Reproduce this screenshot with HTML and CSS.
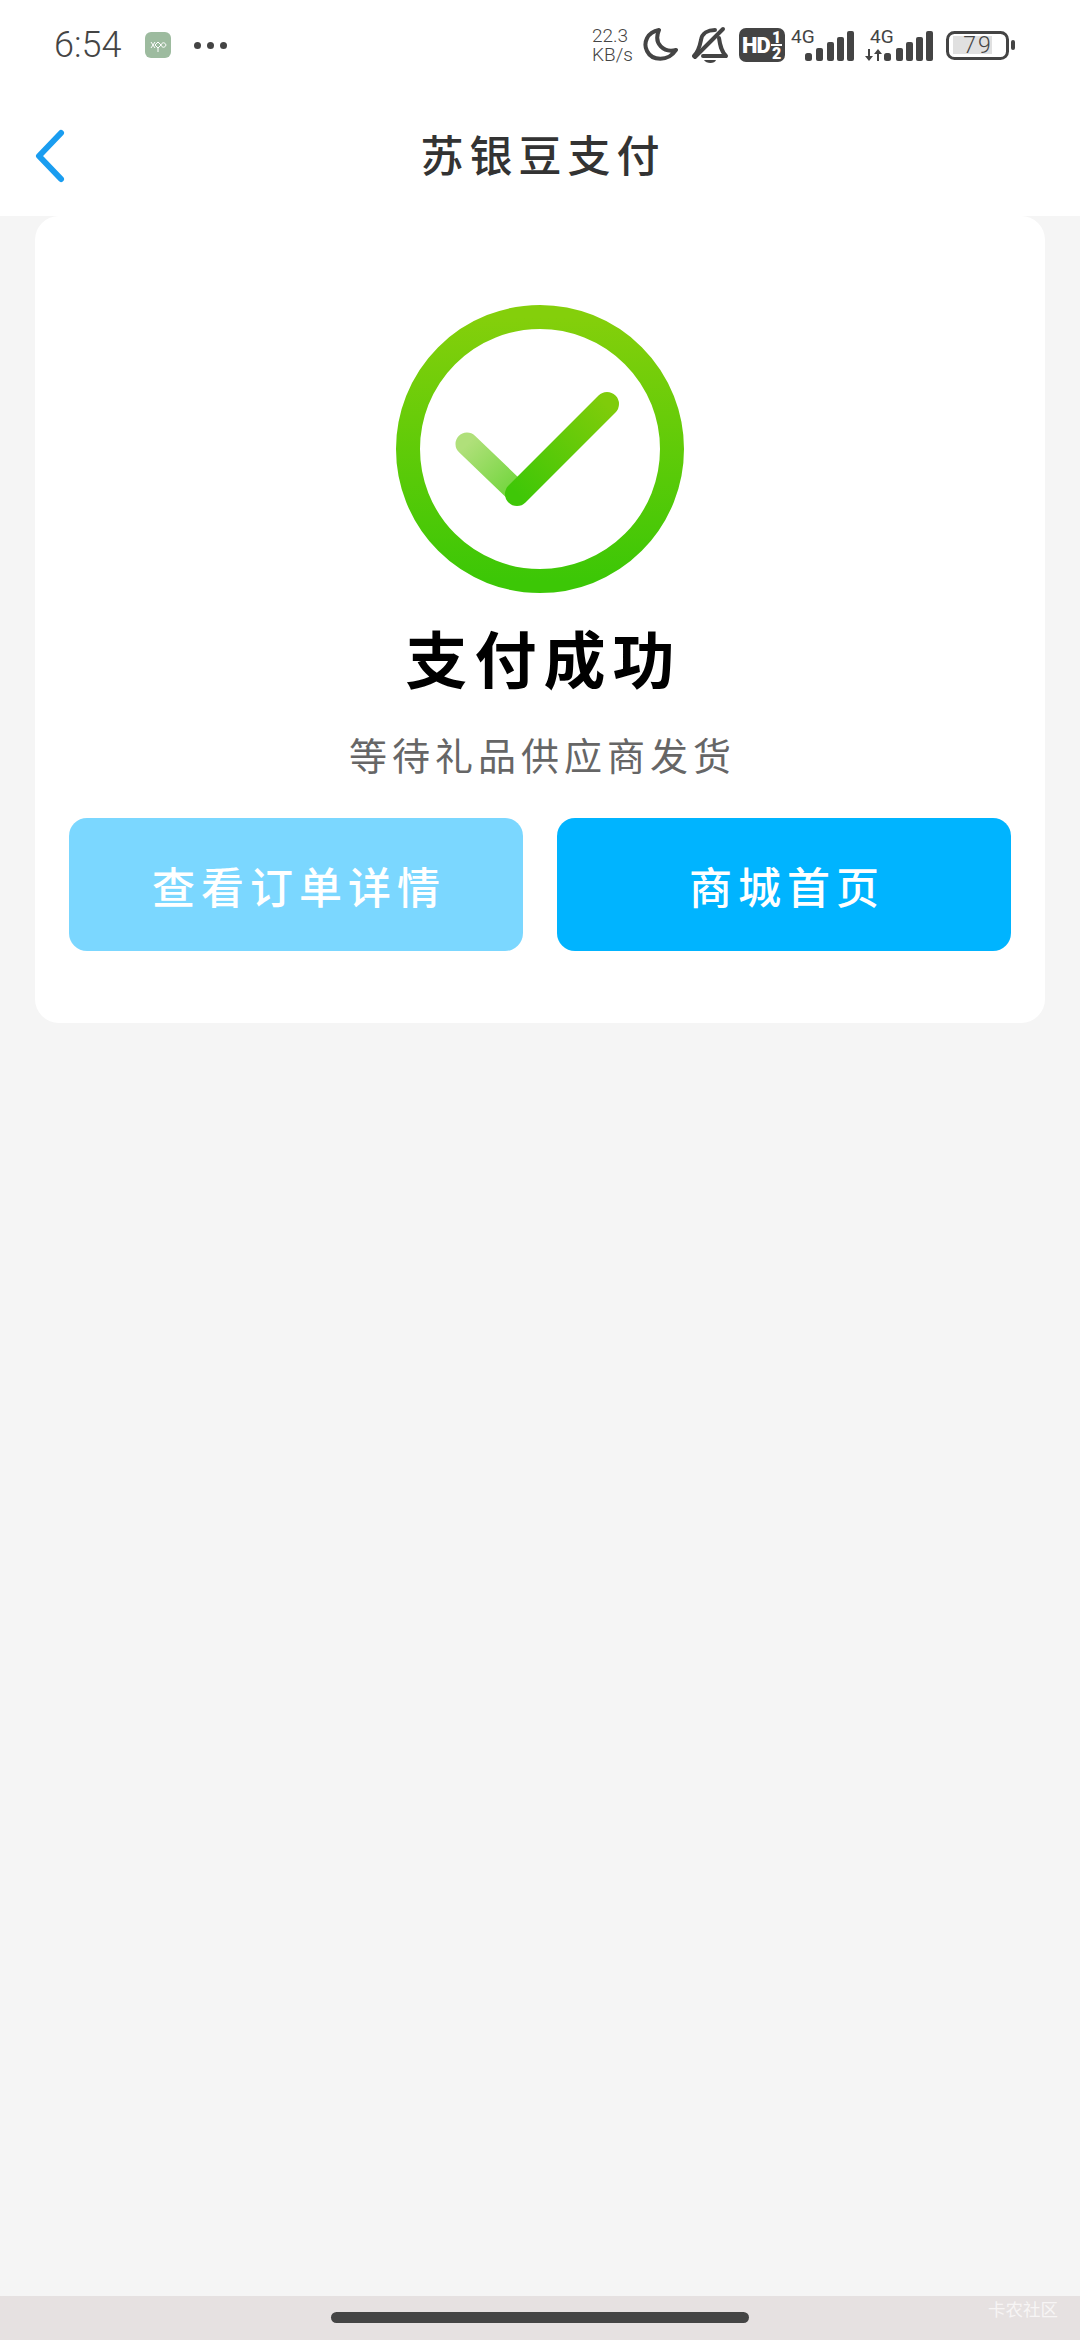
FILE: index.html
```html
<!DOCTYPE html>
<html lang="zh-CN">
<head>
    <meta charset="UTF-8">
    <meta name="viewport" content="width=device-width, initial-scale=1.0">
    <title>苏银豆支付</title>
    <link rel="stylesheet" href="styles.css">
</head>
<body>
    <div class="status-bar">
        <div class="status-left">
            <span class="time">6:54</span>
            <svg class="app-icon" width="26" height="26" viewBox="0 0 26 26">
                <rect width="26" height="26" rx="6" fill="#9dbb9f"/>
                <path d="M6 10l4 6M6 16l4-6M10 13l3-3 3 3-3 3zM16 13c1-3 4-3 5 0-1 3-4 3-5 0zM13 16v4" fill="none" stroke="#fff" stroke-width="1"/>
            </svg>
            <span class="dots"><i></i><i></i><i></i></span>
        </div>
        <div class="status-right">
            <div class="speed"><span>22.3</span><span>KB/s</span></div>
            <!-- moon -->
            <svg class="ic-moon" width="50" height="44" viewBox="0 0 50 44">
                <path d="M17 7C5 9 1 20 5 28c5 10 21 11 29-1-12 3-23-6-17-20z" fill="none" stroke="#444" stroke-width="4" stroke-linejoin="round"/>
            </svg>
            <!-- muted bell -->
            <svg class="ic-bell" width="47" height="44" viewBox="0 0 47 44">
                <path d="M2 33C7 28 8 22 9 17 10 10 16 7 23 7" fill="none" stroke="#444" stroke-width="4" stroke-linecap="round"/>
                <path d="M27 15C28 22 29 28 34 33H11" fill="none" stroke="#444" stroke-width="4" stroke-linecap="round" stroke-linejoin="round"/>
                <path d="M3 34L31 6" stroke="#444" stroke-width="4" stroke-linecap="round"/>
                <path d="M12 37H24C23 41 14 41 12 37z" fill="#444"/>
            </svg>
            <svg class="ic-hd" width="52" height="44" viewBox="0 0 52 44">
                <rect y="5" width="46" height="34" rx="7" fill="#444"/>
                <text class="hd-text" x="3" y="30">HD</text>
                <text class="hd-frac" x="33" y="20">1</text>
                <rect x="32" y="21" width="11" height="2" fill="#fff"/>
                <text class="hd-frac" x="33" y="36">2</text>
            </svg>
            <svg class="ic-signal" width="74" height="44" viewBox="0 0 74 44">
                <text class="net-text" x="0" y="20">4G</text>
                <rect x="14" y="30" width="7" height="8" rx="2.500" fill="#444"/>
                <rect x="25" y="25" width="7" height="13" rx="2" fill="#444"/>
                <rect x="36" y="19" width="7" height="19" rx="2" fill="#444"/>
                <rect x="46" y="14" width="7" height="24" rx="2" fill="#444"/>
                <rect x="56" y="8" width="7" height="30" rx="2" fill="#444"/>
            </svg>
            <svg class="ic-signal" width="81" height="44" viewBox="0 0 81 44">
                <text class="net-text" x="5" y="20">4G</text>
                <path d="M3 26h2v7h3l-4 5-4-5h3zM12 38v-7H9l4-5 4 5h-3v7z" fill="#444"/>
                <rect x="19" y="30" width="7" height="8" rx="2.500" fill="#444"/>
                <rect x="31" y="25" width="7" height="13" rx="2" fill="#444"/>
                <rect x="41" y="19" width="7" height="19" rx="2" fill="#444"/>
                <rect x="51" y="14" width="7" height="24" rx="2" fill="#444"/>
                <rect x="61" y="8" width="7" height="30" rx="2" fill="#444"/>
            </svg>
            <svg class="ic-battery" width="69" height="44" viewBox="0 0 69 44">
                <rect x="1.500" y="9.500" width="60" height="26" rx="7" fill="none" stroke="#444" stroke-width="3"/>
                <rect x="7" y="13" width="39" height="18" fill="#e0e0e0"/>
                <rect x="65" y="17" width="4" height="10" rx="2" fill="#444"/>
                <text class="bat-text" x="32" y="30">79</text>
            </svg>
        </div>
    </div>

    <div class="header">
        <svg class="back" width="34" height="56" viewBox="0 0 34 56">
            <path d="M28 5L6 28l22 23" fill="none" stroke="#1a9df0" stroke-width="6" stroke-linecap="round" stroke-linejoin="round"/>
        </svg>
        <h1 class="header-title">苏银豆支付</h1>
    </div>

    <main class="content">
        <section class="card">
            <svg class="success-icon" width="290" height="290" viewBox="0 0 290 290">
                <defs>
                    <linearGradient id="ringGrad" x1="0" y1="0" x2="0" y2="1">
                        <stop offset="0" stop-color="#84cf0b"/>
                        <stop offset="1" stop-color="#3cc706"/>
                    </linearGradient>
                    <linearGradient id="longGrad" x1="1" y1="0" x2="0" y2="1">
                        <stop offset="0" stop-color="#7fcc0a"/>
                        <stop offset="1" stop-color="#3fc707"/>
                    </linearGradient>
                    <linearGradient id="shortGrad" x1="0" y1="0" x2="1" y2="1">
                        <stop offset="0" stop-color="#b0e07a"/>
                        <stop offset="1" stop-color="#6fd53a"/>
                    </linearGradient>
                </defs>
                <circle cx="145" cy="144" r="132" fill="none" stroke="url(#ringGrad)" stroke-width="24"/>
                <path d="M72 139L122 187" fill="none" stroke="url(#shortGrad)" stroke-width="23" stroke-linecap="round"/>
                <path d="M122 189L212 99" fill="none" stroke="url(#longGrad)" stroke-width="24" stroke-linecap="round"/>
            </svg>
            <h2 class="result-title">支付成功</h2>
            <p class="result-sub">等待礼品供应商发货</p>
            <div class="actions">
                <a class="btn btn-light">查看订单详情</a>
                <a class="btn btn-primary">商城首页</a>
            </div>
        </section>
    </main>

    <div class="nav-bar">
        <span class="home-handle"></span>
        <span class="watermark">卡农社区</span>
    </div>
</body>
</html>
```

FILE: styles.css
```css
* {
    box-sizing: border-box;
}

body {
    font-family: "Noto Sans CJK SC", "Noto Sans", sans-serif;
    background-color: #f5f5f5;
    margin: 0;
    padding: 0;
    display: flex;
    flex-direction: column;
    min-height: 100vh;
}

svg {
    display: block;
    flex-shrink: 0;
}

/* status bar */
.status-bar {
    background-color: #fff;
    height: 90px;
    padding: 0 65px 0 54px;
    display: flex;
    justify-content: space-between;
    align-items: center;
    color: #444;
}

.status-left {
    display: flex;
    align-items: center;
}

.time {
    font-family: Roboto, sans-serif;
    font-weight: 300;
    font-size: 36px;
    line-height: 44px;
    width: 91px;
}

.dots {
    display: flex;
    gap: 6px;
    margin-left: 23px;
}

.dots i {
    width: 7px;
    height: 7px;
    border-radius: 50%;
    background-color: #444;
}

.status-right {
    display: flex;
    align-items: center;
}

.speed {
    width: 50px;
    display: flex;
    flex-direction: column;
    font-family: Roboto, sans-serif;
    font-weight: 300;
    font-size: 19px;
    line-height: 19px;
}

.hd-text {
    font-family: Roboto, sans-serif;
    font-weight: 900;
    font-size: 22px;
    letter-spacing: -1px;
    fill: #fff;
}

.hd-frac {
    font-family: Roboto, sans-serif;
    font-weight: 900;
    font-size: 16px;
    fill: #fff;
}

.net-text {
    font-family: Roboto, sans-serif;
    font-size: 19px;
    fill: #444;
}

.bat-text {
    font-family: Roboto, sans-serif;
    font-weight: 300;
    font-size: 23px;
    letter-spacing: 2px;
    text-anchor: middle;
    fill: #444;
}

/* header */
.header {
    background-color: #fff;
    height: 126px;
    position: relative;
    display: flex;
    align-items: center;
    justify-content: center;
}

.back {
    position: absolute;
    left: 33px;
    top: 38px;
}

.header-title {
    margin: 0;
    padding-left: 6px;
    font-size: 43px;
    font-weight: 500;
    letter-spacing: 6px;
    color: #333;
    line-height: 80px;
}

/* card */
.content {
    flex: 1;
    padding: 0 35px;
}

.card {
    background-color: #fff;
    border-radius: 24px;
    padding: 89px 34px 72px;
    display: flex;
    flex-direction: column;
    align-items: center;
}

.result-title {
    margin: 22px 0 0;
    padding-left: 7px;
    font-size: 62px;
    font-weight: 700;
    letter-spacing: 7px;
    line-height: 80px;
    color: #000;
}

.result-sub {
    margin: 32px 0 0;
    padding-left: 5px;
    font-size: 38px;
    letter-spacing: 5px;
    line-height: 50px;
    color: #666;
}

.actions {
    width: 100%;
    margin-top: 39px;
    display: grid;
    grid-template-columns: 1fr 1fr;
    gap: 34px;
}

.btn {
    height: 133px;
    padding-left: 6px;
    border-radius: 18px;
    display: flex;
    align-items: center;
    justify-content: center;
    font-size: 43px;
    font-weight: 500;
    letter-spacing: 6px;
    color: #fff;
}

.btn-light {
    background-color: #7bd7ff;
}

.btn-primary {
    background-color: #00b4ff;
}

/* bottom bar */
.nav-bar {
    height: 44px;
    background-color: #e6e1e1;
    position: relative;
    display: flex;
    align-items: center;
    justify-content: center;
}

.home-handle {
    width: 418px;
    height: 11px;
    border-radius: 6px;
    background-color: #444;
    margin-top: -1px;
}

.watermark {
    position: absolute;
    right: 22px;
    top: 1px;
    font-size: 17.500px;
    line-height: 24px;
    color: #f7f5f5;
}
```
